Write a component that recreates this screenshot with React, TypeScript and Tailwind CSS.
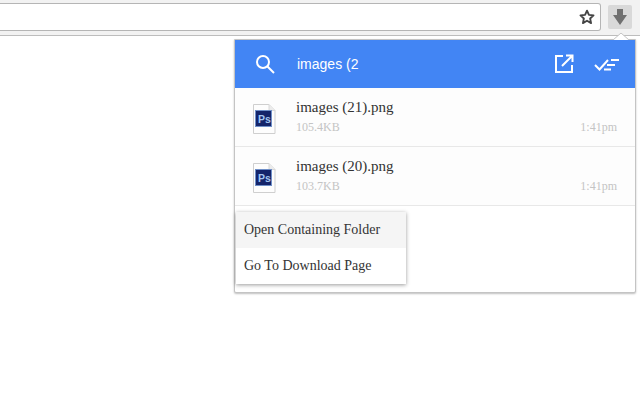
const serif = "font-['Liberation_Serif',serif]"

const files = [
  { name: 'images (21).png', size: '105.4KB', time: '1:41pm' },
  { name: 'images (20).png', size: '103.7KB', time: '1:41pm' },
]

function PsIcon() {
  return (
    <svg width="24" height="30" viewBox="0 0 24 30" className="shrink-0">
      <path d="M1.500 0.500H17L23 6.500V29.500H1.500Z" fill="#fdfdfd" stroke="#cfcfcf" />
      <path d="M17 0.500V6.500H23" fill="#ececec" stroke="#d8d8d8" />
      <rect x="3.500" y="6.500" width="16" height="16" fill="#14246a" stroke="#6f8fc8" />
      <text x="6" y="18.500" fontSize="10.500" fontWeight="700" fontFamily="Liberation Sans, sans-serif" fill="#a3c4f0">Ps</text>
    </svg>
  )
}

function FileRow({ name, size, time }: { name: string; size: string; time: string }) {
  return (
    <div className="flex h-[59px] border-b border-[#e8e8e8] bg-[#fdfdfd] pl-[17px] pr-[18px]">
      <div className="flex items-center pt-[3px]">
        <PsIcon />
      </div>
      <div className="ml-[20px] flex-1 pt-[9px]">
        <div className="text-[15px] leading-[20px] text-[#333]">{name}</div>
        <div className="mt-[2px] flex justify-between text-[12px] leading-[16px] text-[#c4c4c4]">
          <span>{size}</span>
          <span>{time}</span>
        </div>
      </div>
    </div>
  )
}

export default function App() {
  return (
    <div className={`relative h-[400px] w-[640px] overflow-hidden bg-white ${serif}`}>
      <div className="flex h-[36px] items-start border-b border-[#bdbdbd] bg-[#f2f2f2]">
        <div className="mt-[3px] flex h-[28px] w-[601px] items-center justify-end rounded-r-[3px] border border-l-0 border-[#b5b5b5] bg-white pr-[5px]">
          <svg width="16" height="16" viewBox="0 0 24 24" fill="none" stroke="#444" strokeWidth="2.800" strokeLinejoin="round">
            <path d="M12 2.500l2.900 6.300 6.900.8-5.100 4.700 1.400 6.800-6.100-3.400-6.100 3.400 1.400-6.800-5.100-4.700 6.900-.8z" />
          </svg>
        </div>
        <div className="ml-[7px] mt-[5px] flex h-[24px] w-[24px] items-center justify-center rounded-[2px] bg-[#d9d9d9]">
          <svg width="14" height="16" viewBox="0 0 14 16" fill="#707070">
            <path d="M4 0h6v6h4l-7 10-7-10h4z" />
          </svg>
        </div>
      </div>

      {/* popup */}
      <div className="absolute left-[234px] top-[39px] w-[402px] rounded-b-[2px] border border-[#c4c4c4] bg-white shadow-[0_1px_2px_rgba(0,0,0,0.25)]">
        <svg width="16" height="7" viewBox="0 0 16 7" className="absolute left-[378px] top-[-7px]">
          <path d="M0 7L8 0l8 7" fill="#fff" stroke="#c4c4c4" />
        </svg>
        <div className="flex h-[48px] items-center bg-[#4285f4] pl-[20px] pr-[15px] text-white">
          <svg width="20" height="20" viewBox="0 0 20 20" fill="none" stroke="#fff" strokeWidth="2">
            <circle cx="8" cy="8" r="6" />
            <path d="M12.500 12.500L19 19" />
          </svg>
          <span className="ml-[22px] flex-1 font-['Liberation_Sans',sans-serif] text-[14px]">images (2</span>
          <svg width="20" height="20" viewBox="0 0 20 20" fill="none" stroke="#fff" strokeWidth="2">
            <path d="M9 2H2v16h16v-7" />
            <path d="M12 1.500h6.500V8M18 2L8 12" />
          </svg>
          <svg width="26" height="16" viewBox="0 0 26 16" fill="none" stroke="#fff" strokeWidth="2" className="ml-[20px]">
            <path d="M1 9l4.500 4.500L14 4" />
            <path d="M17 4h8M13 9h8M10 13.500h7" />
          </svg>
        </div>
        {files.map((f) => (
          <FileRow key={f.name} {...f} />
        ))}
        <div className="pb-[8px] pl-[1px] pt-[6px]">
          <div className="w-[170px] bg-white text-[14px] leading-[16px] text-[#333] shadow-[0_1px_4px_rgba(0,0,0,0.4)]">
            <div className="flex h-[36px] items-center bg-[#f5f5f5] pb-[1px] pl-[8px]">Open Containing Folder</div>
            <div className="flex h-[36px] items-center pb-[1px] pl-[8px]">Go To Download Page</div>
          </div>
        </div>
      </div>
    </div>
  )
}
